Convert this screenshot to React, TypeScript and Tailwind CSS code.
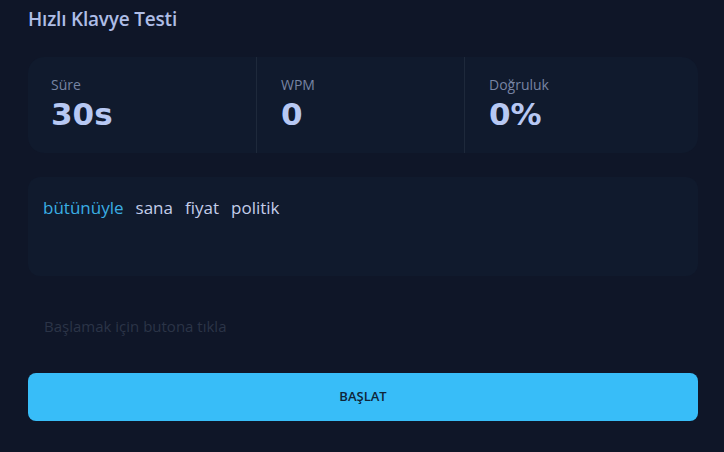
const words = ["bütünüyle", "sana", "fiyat", "politik"];

const stats = [
  { label: "Süre", value: "30s" },
  { label: "WPM", value: "0" },
  { label: "Doğruluk", value: "0%" },
];

export default function App() {
  return (
    <div
      className="min-h-[452px] w-full bg-[#0f1628] pl-[28px] pr-[26px] pt-[7px] pb-[31px]"
      style={{ fontFamily: '"Open Sans", "Noto Sans", sans-serif' }}
    >
      <h1 className="text-[19px] font-semibold leading-[25px] tracking-[-0.2px] text-[#aebde6]">
        Hızlı Klavye Testi
      </h1>

      <div className="mt-[25px] grid h-[96px] grid-cols-[228px_208px_1fr] rounded-2xl bg-[#101a2d]">
        {stats.map((s, i) => (
          <div
            key={s.label}
            className={
              i === 0
                ? "pt-[18px] pl-[23px]"
                : "border-l border-[#1e293b] pt-[18px] pl-[24px]"
            }
          >
            <div className="text-[14px] leading-[20px] text-[#7784a3]">{s.label}</div>
            <div
              className="mt-[1px] text-[31px] font-bold leading-[36px] text-[#b7c8f3]"
              style={{ fontFamily: '"DejaVu Sans", sans-serif' }}
            >
              {s.value}
            </div>
          </div>
        ))}
      </div>

      <div className="mt-[24px] flex h-[99px] items-start gap-[12px] rounded-xl bg-[#101a2d] px-[15px] pt-[19px]">
        {words.map((w, i) => (
          <span
            key={w}
            className={
              i === 0
                ? "text-[17px] leading-[24px] text-[#3aaee4]"
                : "text-[17px] leading-[24px] text-[#c3cdea]"
            }
          >
            {w}
          </span>
        ))}
      </div>

      <p className="mt-[40px] pl-[16px] text-[15px] leading-[20px] text-[#2b3447]">
        Başlamak için butona tıkla
      </p>

      <button className="mt-[37px] flex h-[48px] w-full items-center justify-center rounded-lg bg-[#38bdf8] text-[13px] font-semibold text-[#0f2538]">
        BAŞLAT
      </button>
    </div>
  );
}
